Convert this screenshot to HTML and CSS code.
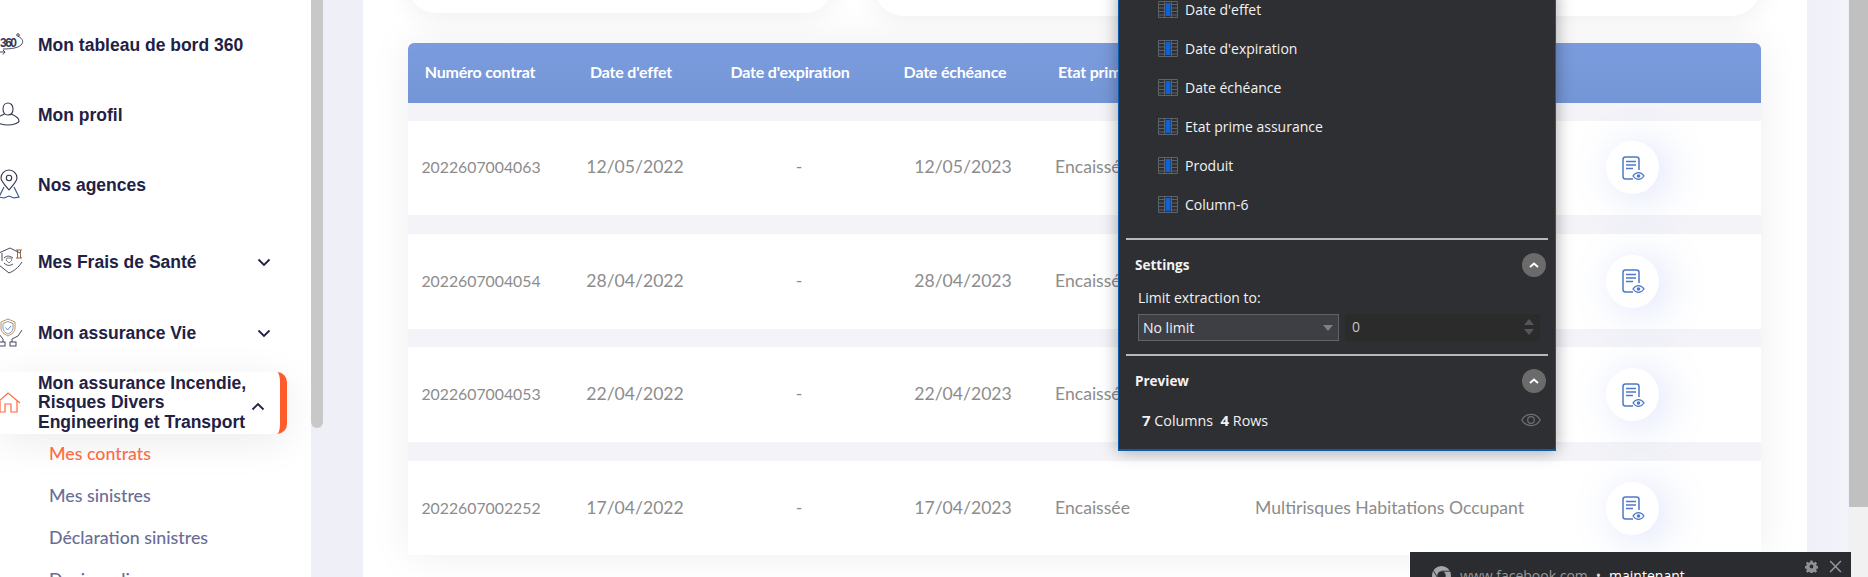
FILE: index.html
```html
<!DOCTYPE html>
<html lang="fr">
<head>
  <meta charset="UTF-8">
  <title>Mes contrats</title>
  <link rel="stylesheet" href="styles.css">
</head>
<body>
  <svg class="defs" width="0" height="0">
    <symbol id="col" viewBox="0 0 20 17">
      <path d="M.5.5h19v16H.5zM6.500.5v16M13.500.5v16M.5 3.500h6M.5 7h6M.5 10.500h6M.5 14h6M13.500 3.500h6M13.500 7h6M13.500 10.500h6M13.500 14h6" fill="none" stroke="#5e6369"/>
      <rect x="7.500" y="2" width="5" height="13" fill="#0a63d8"/>
    </symbol>
    <symbol id="doc" viewBox="0 0 24 24">
      <path d="M12 23H4.500C2.800 23 2 22 2 20.500V3.500C2 2 2.800 1 4.500 1h11C17.200 1 18 2 18 3.500V14" fill="none" stroke="#4f79c6" stroke-width="1.500"/>
      <path d="M5 5.500h10M5 9h10M5 12.500h7" stroke="#4f79c6" stroke-width="1.500"/>
      <path d="M12 20c3-4.500 8-4.500 11 0-3 4.500-8 4.500-11 0z" fill="#fff" stroke="#4f79c6" stroke-width="1.300"/>
      <circle cx="17.500" cy="20" r="1.800" fill="#4f79c6"/>
    </symbol>
    <symbol id="up" viewBox="0 0 12 8">
      <path d="M2 6l4-3.500L10 6" fill="none" stroke="#fff" stroke-width="2"/>
    </symbol>
    <symbol id="chev" viewBox="0 0 14 9">
      <path d="M1.500 1.500L7 7l5.500-5.500" fill="none" stroke="#1f2145" stroke-width="1.800"/>
    </symbol>
  </svg>

  <div class="page">
    <aside class="sidebar">
      <nav class="menu">
        <a class="item">
          <svg class="ico" viewBox="0 0 26 26" fill="none" stroke="#33354f" stroke-width=".9">
            <text x="0" y="15" font-family="Liberation Sans" font-size="12" textLength="17" fill="#33354f" stroke="none">360</text>
            <path d="M18 4c5 3 6 6 3 9-3 3-10 4-18 4"/>
            <circle cx="18" cy="3" r="1.300"/>
            <path d="M0 20h5l-2-2M5 20l-2 2.500"/>
          </svg>
          <span class="label">Mon tableau de bord 360</span>
        </a>
        <a class="item">
          <svg class="ico" viewBox="0 0 26 26" fill="none" stroke="#33354f" stroke-width="1.100">
            <path d="M3 7c0-8 10-8 10 0 0 4-2 6-5 6s-5-2-5-6z"/>
            <path d="M4.500 12C1 14-4 15-4 19c0 2 7 4 12 4s11-2 11-4c0-3-3-5-8-7"/>
          </svg>
          <span class="label">Mon profil</span>
        </a>
        <a class="item">
          <svg class="ico" viewBox="0 0 26 30" fill="none" stroke="#33354f" stroke-width="1.100">
            <path d="M9 20C4 14 1 11 1 8a8 8 0 0116 0c0 3-3 6-8 12z"/>
            <circle cx="9" cy="8" r="2.700"/>
            <path d="M4 17L-1 27l5 1 5-2 5 2 5-1-5-10" stroke="#2e4f80"/>
          </svg>
          <span class="label">Nos agences</span>
        </a>
        <a class="item item-gap">
          <svg class="ico" viewBox="0 0 26 32" fill="none" stroke="#33354f" stroke-width=".9">
            <path d="M-1 7L10 2l10 5M2 7v8M-1 19l10 8c5-2 9-5 13-11"/>
            <path d="M4 12c3-3 6-2 9 0M4 17c3 3 6 3 9 1"/>
            <path d="M6 14l3 3 3-3-1-2H7z" stroke="#777"/>
            <path d="M16 4h6M17.500 4v8M20.500 4v8M16 12h6" stroke="#8a5a30"/>
          </svg>
          <span class="label">Mes Frais de Santé</span>
          <svg class="chev"><use href="#chev"/></svg>
        </a>
        <a class="item">
          <svg class="ico" viewBox="0 0 26 30" fill="none" stroke="#33354f" stroke-width=".9">
            <path d="M8 1l7 3v6c0 4-3 6-7 8-4-2-7-4-7-8V4z" stroke="#b5854a"/>
            <path d="M8 3.500l5 2v4.500c0 3-2 4.500-5 6-3-1.500-5-3-5-6V5.500z" stroke="#7b8fa8"/>
            <path d="M5.500 9.500l2 2.500 3.500-4" stroke="#4f79c6"/>
            <path d="M-2 15l5 6v3M22 12l-4 6-6 3v3"/>
            <rect x="-1" y="24" width="6" height="4"/>
            <rect x="10" y="24" width="6" height="4"/>
          </svg>
          <span class="label">Mon assurance Vie</span>
          <svg class="chev"><use href="#chev"/></svg>
        </a>
        <a class="item active">
          <svg class="ico" viewBox="0 0 26 26" fill="none" stroke="#ff6a45" stroke-width="1.200">
            <path d="M-3 13L8 3l12 10"/>
            <path d="M0 11v11h5v-8h6v8h6V11"/>
          </svg>
          <span class="label">Mon assurance Incendie, Risques Divers Engineering et Transport</span>
          <svg class="chev chev-open"><use href="#chev"/></svg>
        </a>
      </nav>
      <ul class="submenu">
        <li class="current">Mes contrats</li>
        <li>Mes sinistres</li>
        <li>Déclaration sinistres</li>
        <li>Devis en ligne</li>
      </ul>
    </aside>
    <div class="side-scroll"><div class="side-thumb"></div></div>

    <main class="content">
      <div class="card">
        <div class="summary">
          <div class="box box-one"></div>
          <div class="box box-two"></div>
        </div>
        <section class="table">
          <div class="thead">
            <span>Numéro contrat</span>
            <span>Date d'effet</span>
            <span>Date d'expiration</span>
            <span>Date échéance</span>
            <span class="left">Etat prime assurance</span>
          </div>
          <div class="rows">
            <div class="row">
              <span class="num">2022607004063</span><span>12/05/2022</span><span>-</span><span>12/05/2023</span>
              <span class="left">Encaissée</span><span class="left">Multirisques Habitations Occupant</span>
              <span class="btn"><svg class="doc"><use href="#doc"/></svg></span>
            </div>
            <div class="row">
              <span class="num">2022607004054</span><span>28/04/2022</span><span>-</span><span>28/04/2023</span>
              <span class="left">Encaissée</span><span class="left">Multirisques Habitations Occupant</span>
              <span class="btn"><svg class="doc"><use href="#doc"/></svg></span>
            </div>
            <div class="row">
              <span class="num">2022607004053</span><span>22/04/2022</span><span>-</span><span>22/04/2023</span>
              <span class="left">Encaissée</span><span class="left">Multirisques Habitations Occupant</span>
              <span class="btn"><svg class="doc"><use href="#doc"/></svg></span>
            </div>
            <div class="row">
              <span class="num">2022607002252</span><span>17/04/2022</span><span>-</span><span>17/04/2023</span>
              <span class="left">Encaissée</span><span class="left">Multirisques Habitations Occupant</span>
              <span class="btn"><svg class="doc"><use href="#doc"/></svg></span>
            </div>
          </div>
        </section>
      </div>
    </main>
    <div class="page-scroll"><div class="page-thumb"></div></div>
  </div>

  <div class="panel">
    <ul class="columns">
      <li><svg class="col"><use href="#col"/></svg>Date d'effet</li>
      <li><svg class="col"><use href="#col"/></svg>Date d'expiration</li>
      <li><svg class="col"><use href="#col"/></svg>Date échéance</li>
      <li><svg class="col"><use href="#col"/></svg>Etat prime assurance</li>
      <li><svg class="col"><use href="#col"/></svg>Produit</li>
      <li><svg class="col"><use href="#col"/></svg>Column-6</li>
    </ul>
    <div class="sect">
      <div class="sect-head"><b>Settings</b><span class="toggle"><svg class="up"><use href="#up"/></svg></span></div>
      <div class="limit-label">Limit extraction to:</div>
      <div class="limit">
        <div class="select">No limit<i class="caret"></i></div>
        <div class="number">0<span class="spin"><i class="spin-up"></i><i class="spin-down"></i></span></div>
      </div>
    </div>
    <div class="sect">
      <div class="sect-head"><b>Preview</b><span class="toggle"><svg class="up"><use href="#up"/></svg></span></div>
      <div class="counts">
        <span><b>7</b> Columns&nbsp; <b>4</b> Rows</span>
        <svg class="eye" viewBox="0 0 20 14" fill="none" stroke="#6d7074" stroke-width="1.200">
          <path d="M.8 7c4-7.500 14.400-7.500 18.400 0-4 7.500-14.400 7.500-18.400 0z"/>
          <circle cx="10" cy="7" r="3.300"/>
        </svg>
      </div>
    </div>
  </div>

  <div class="notif">
    <svg class="notif-logo" viewBox="0 0 20 20">
      <circle cx="10" cy="10" r="10" fill="#a5a6a8"/>
      <circle cx="10" cy="10" r="4.500" fill="#2b2c30"/>
      <path d="M10 5.500h9M6 12.500L1.500 5M14 12.500l-4.500 7.500" stroke="#2b2c30"/>
    </svg>
    <span class="notif-text">www.facebook.com</span>
    <span class="notif-dot">•</span>
    <span class="notif-time">maintenant</span>
    <svg class="gear" viewBox="0 0 24 24"><path fill="#8f9194" d="M10 1h4l.6 3 2.200.9 2.600-1.700 2.800 2.800-1.700 2.600.9 2.200 3 .6v4l-3 .6-.9 2.200 1.700 2.600-2.800 2.800-2.600-1.700-2.200.9-.6 3h-4l-.6-3-2.200-.9-2.600 1.700-2.800-2.800 1.700-2.600-.9-2.200-3-.6v-4l3-.6.9-2.200-1.700-2.600 2.800-2.800 2.600 1.700 2.200-.9zM12 8.500a3.500 3.500 0 100 7 3.500 3.500 0 000-7z" fill-rule="evenodd"/></svg>
    <svg class="close" viewBox="0 0 12 12"><path d="M1 1l10 10M11 1L1 11" stroke="#9a9c9f" stroke-width="1.300"/></svg>
  </div>
</body>
</html>
```
FILE: styles.css
```css
* {
  box-sizing: border-box;
}

html, body {
  margin: 0;
  height: 100%;
  overflow: hidden;
}

body {
  position: relative;
  font-family: Lato, sans-serif;
  background: #eeeff7;
}

.defs {
  position: absolute;
}

.page {
  display: flex;
  height: 577px;
}

/* sidebar */
.sidebar {
  width: 311px;
  flex: none;
  background: #fff;
  padding-top: 10px;
  overflow: hidden;
}

.item {
  display: flex;
  align-items: center;
  height: 70px;
  color: #1f2145;
  font-family: "Liberation Sans", Arial, sans-serif;
  font-weight: 700;
  font-size: 17.500px;
}

.item-gap {
  margin-top: 7px;
  margin-bottom: 1px;
}

.ico {
  width: 26px;
  height: 34px;
  margin-right: 12px;
  flex: none;
}

.label {
  width: 215px;
}

.chev {
  width: 14px;
  height: 9px;
  margin-left: 4px;
}

.active {
  width: 287px;
  height: 62px;
  margin-top: 4px;
  background: #fff;
  border-right: 7px solid #ff5c2e;
  border-radius: 0 10px 10px 0;
  line-height: 19.500px;
  box-shadow: 0 8px 40px rgba(0, 0, 0, .08);
}

.chev-open {
  transform: rotate(180deg);
  margin-left: -2px;
  margin-top: 6px;
}

.submenu {
  list-style: none;
  margin: -2px 0 0;
  padding: 0 0 0 49px;
  color: #6a6d98;
  font-size: 17.800px;
  font-weight: 500;
  position: relative;
}

.submenu li {
  height: 42px;
  line-height: 42px;
}

.submenu .current {
  color: #ff6a45;
}

.side-scroll {
  width: 12px;
  flex: none;
  background: #eeeff7;
}

.side-thumb {
  height: 428px;
  background: #c8c8c8;
  border-radius: 0 0 6px 6px;
}

/* main */
.content {
  flex: 1;
  padding: 0 41px 0 40px;
  background: linear-gradient(to right, #eeeff7, #eeeff7 97%, #f4f5fb);
}

.card {
  height: 577px;
  background: #fff;
  padding: 0 46px 0 45px;
}

.summary {
  display: flex;
  gap: 43px;
  padding-left: 1px;
  padding-right: 1px;
  align-items: flex-start;
}

/* only the bottom of these boxes is in view */
.box {
  margin-top: -40px;
  background: #fff;
  border-radius: 30px;
  box-shadow: 0 0 30px rgba(0, 0, 0, .08);
}

.box-one {
  width: 423px;
  height: 53px;
}

.box-two {
  flex: 1;
  height: 56px;
}

.table {
  margin-top: 27px;
  box-shadow: 0 0 40px rgba(0, 0, 0, .07);
}

.thead,
.row {
  display: grid;
  align-items: center;
  text-align: center;
}

.thead {
  grid-template-columns: 144px 158px 160px 170px 1fr;
  height: 60px;
  padding-bottom: 3px;
  background: linear-gradient(#7a9bdd, #7596d6);
  color: #fff;
  font-weight: 700;
  font-size: 16px;
  border-radius: 6px 6px 0 0;
  letter-spacing: -.2px;
}

.thead .left {
  padding-left: 18px;
  text-align: left;
  white-space: nowrap;
}

.rows {
  display: flex;
  flex-direction: column;
  gap: 18.800px;
  padding-top: 17.700px;
  background: #f3f3f8;
}

.row {
  grid-template-columns: 146px 162px 166px 162px 200px 346px 1fr;
  height: 94.600px;
  padding-bottom: 2px;
  background: #fff;
  color: #8c8c8c;
  font-size: 17.600px;
}

.row .left {
  text-align: left;
  padding-left: 11px;
  white-space: nowrap;
}

.row .num {
  font-size: 15.800px;
}

.btn {
  display: flex;
  align-items: center;
  justify-content: center;
  width: 53px;
  height: 53px;
  margin-left: 16px;
  margin-top: 2px;
  border-radius: 50%;
  background: #fff;
  box-shadow: 8px 4px 40px rgba(110, 140, 235, .25);
}

.doc {
  width: 24px;
  height: 24px;
}

.page-scroll {
  width: 19px;
  flex: none;
  margin-left: 1px;
  background: #f1f1f1;
}

.page-thumb {
  height: 507px;
  background: #c0c0c0;
}

/* extraction panel */
.panel {
  position: absolute;
  left: 1118px;
  top: -11px;
  width: 438px;
  height: 462px;
  background: #2e2f33;
  border: 1px solid #0b5cad;
  border-bottom-width: 2px;
  box-shadow: 0 0 16px rgba(0, 0, 0, .35);
  color: #f2f2f2;
  font-family: "Open Sans", "Noto Sans", sans-serif;
  font-size: 14px;
}

.columns {
  list-style: none;
  margin: 0;
  padding: 0 0 0 39px;
  height: 248px;
}

.columns li {
  display: flex;
  align-items: center;
  gap: 7px;
  height: 39px;
}

.col {
  width: 20px;
  height: 17px;
}

.sect {
  margin: 0 7px;
  border-top: 2px solid #b8b8b8;
  padding: 13px 8px 0;
  height: 116px;
}

.sect b {
  font-size: 13.500px;
}

.sect-head {
  display: flex;
  justify-content: space-between;
  align-items: center;
  padding-left: 1px;
  height: 24px;
  margin-right: -6px;
}

.toggle {
  display: flex;
  align-items: center;
  justify-content: center;
  width: 24px;
  height: 24px;
  background: #6b6b6b;
  border-radius: 50%;
}

.up {
  width: 12px;
  height: 8px;
}

.limit-label {
  margin: 11px 0 6px 4px;
  height: 20px;
  line-height: 20px;
}

.limit {
  display: flex;
  gap: 6px;
  margin-left: 4px;
}

.select,
.number {
  position: relative;
  height: 27px;
  line-height: 25px;
}

.select {
  width: 202px;
  padding-left: 4px;
  background: #3e3f45;
  border: 1px solid #626367;
}

.caret {
  position: absolute;
  right: 5px;
  top: 10px;
  border: 5px solid transparent;
  border-top: 6px solid #7f8084;
  border-bottom: 0;
}

.number {
  width: 196px;
  padding-left: 7px;
  background: #2b2b2c;
  color: #c4c4c4;
}

.spin {
  position: absolute;
  right: 6px;
  top: 5px;
}

.spin i {
  display: block;
  border: 5px solid transparent;
}

.spin-up {
  border-top: 0 !important;
  border-bottom: 6px solid #55565a !important;
  margin-bottom: 4px;
}

.spin-down {
  border-bottom: 0 !important;
  border-top: 6px solid #55565a !important;
}

.counts {
  display: flex;
  justify-content: space-between;
  align-items: center;
  margin: 17px -1px 0 8px;
  font-size: 14.300px;
}

.counts b {
  font-size: 15px;
}

.eye {
  width: 20px;
  height: 14px;
}

/* notification */
.notif {
  position: absolute;
  left: 1410px;
  top: 552px;
  width: 441px;
  height: 40px;
  display: flex;
  align-items: flex-start;
  background: #2b2c30;
  color: #999;
  font-family: "Open Sans", "Noto Sans", sans-serif;
  font-size: 14px;
  line-height: 20px;
  padding: 14px 0 0 22px;
}

.notif-logo {
  width: 19px;
  height: 19px;
  margin-right: 9px;
}

.notif-dot {
  margin: 0 8px;
  color: #ddd;
}

.notif-time {
  color: #fff;
}

.gear,
.close {
  position: absolute;
  top: 8px;
  width: 13px;
  height: 13px;
}

.gear {
  right: 33px;
}

.close {
  right: 9px;
}
```
